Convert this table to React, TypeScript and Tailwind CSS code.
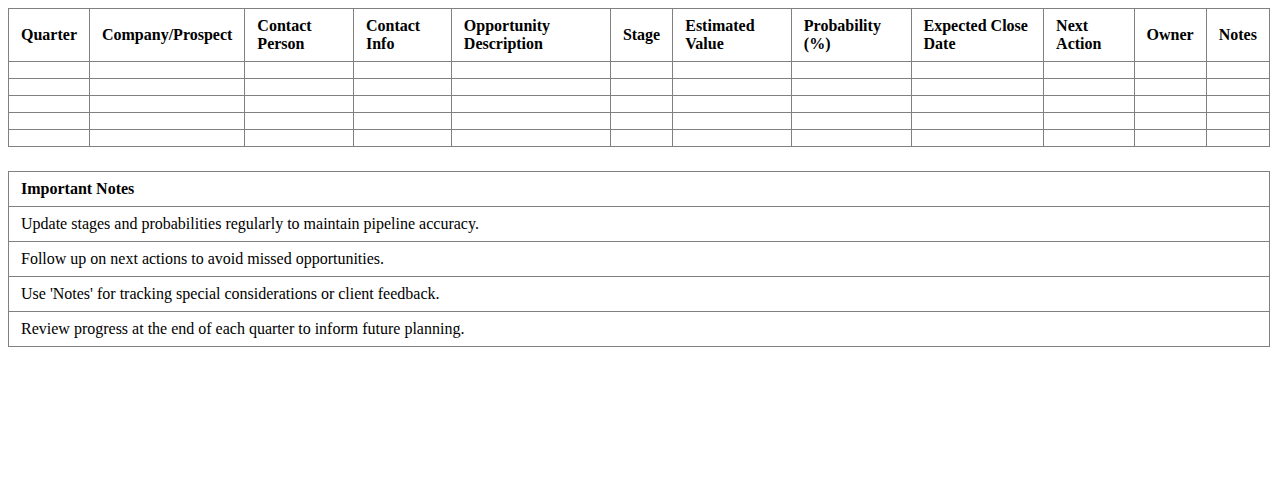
import React from "react";

const headers = [
  "Quarter",
  "Company/Prospect",
  "Contact Person",
  "Contact Info",
  "Opportunity Description",
  "Stage",
  "Estimated Value",
  "Probability (%)",
  "Expected Close Date",
  "Next Action",
  "Owner",
  "Notes",
];

const notes = [
  "Update stages and probabilities regularly to maintain pipeline accuracy.",
  "Follow up on next actions to avoid missed opportunities.",
  "Use 'Notes' for tracking special considerations or client feedback.",
  "Review progress at the end of each quarter to inform future planning.",
];

export default function App() {
  return (
    <div
      className="p-2 bg-white text-black text-[16px] leading-normal"
      style={{ fontFamily: '"Liberation Serif", "Times New Roman", serif' }}
    >
      <table className="w-full border-collapse border border-[#808080]">
        <thead>
          <tr>
            {headers.map((h) => (
              <th
                key={h}
                className="border border-[#808080] px-3 py-2 text-left font-bold align-middle leading-[18px]"
              >
                {h}
              </th>
            ))}
          </tr>
        </thead>
        <tbody>
          {[0, 1, 2, 3, 4].map((r) => (
            <tr key={r}>
              {headers.map((h) => (
                <td key={h} className="border border-[#808080] px-3 py-2"></td>
              ))}
            </tr>
          ))}
        </tbody>
      </table>
      <table className="w-full border-collapse border border-[#808080] mt-6">
        <tbody>
          <tr>
            <td className="border border-[#808080] px-3 py-2 font-bold leading-[18px]">
              Important Notes
            </td>
          </tr>
          {notes.map((n) => (
            <tr key={n}>
              <td className="border border-[#808080] px-3 py-2 leading-[18px]">{n}</td>
            </tr>
          ))}
        </tbody>
      </table>
    </div>
  );
}
